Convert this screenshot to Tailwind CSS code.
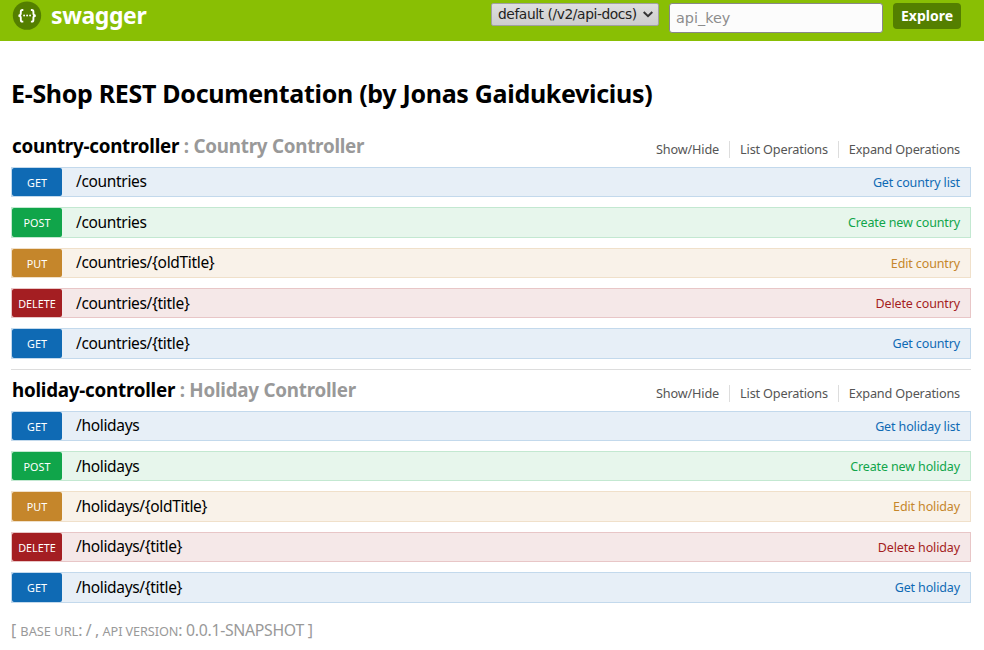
<!DOCTYPE html>
<html lang="en">
<head>
<meta charset="utf-8">
<title>Swagger UI</title>
<script src="https://cdn.jsdelivr.net/npm/@tailwindcss/browser@4"></script>
</head>
<body class="bg-white font-['Noto_Sans','Open_Sans',sans-serif] text-black h-[650px] overflow-hidden">
<header class="h-[41px] bg-[#89bf04] pl-[12px] pr-[23px] flex items-start">
  <svg class="mt-[1px] w-[30px] h-[30px] shrink-0" viewBox="0 0 30 30" fill="none">
    <circle cx="15" cy="14.6" r="14.2" fill="#547f00"/>
    <g stroke="#fff" stroke-width="1.9">
      <path d="M11.3 9H10.4C9.2 9 8.8 9.6 8.8 10.7V12.6C8.8 13.8 8.2 14.7 6.4 14.7C8.2 14.7 8.8 15.6 8.8 16.8V18.7C8.8 19.8 9.2 20.6 10.4 20.6H11.3"/>
      <path d="M18.9 9H19.8C21 9 21.4 9.6 21.4 10.7V12.6C21.4 13.8 22 14.7 23.8 14.7C22 14.7 21.4 15.6 21.4 16.8V18.7C21.4 19.8 21 20.6 19.8 20.6H18.9"/>
    </g>
    <g fill="#fff"><circle cx="12.1" cy="14.5" r="0.95"/><circle cx="15.1" cy="14.5" r="0.95"/><circle cx="18.1" cy="14.5" r="0.95"/></g>
  </svg>
  <span class="ml-[9px] text-[23px] font-bold leading-[30px] tracking-[-0.4px] text-white">swagger</span>
  <div class="ml-auto flex items-start">
    <div class="mt-[3px] w-[168px] h-[23px] rounded-[2px] border border-[#a0a0a0] bg-linear-to-b from-[#dedede] to-[#cdcdcd] pl-[6px] pr-[5px] flex items-center justify-between font-['DejaVu_Sans',sans-serif] text-[13.8px] leading-[21px] text-[#222]">
      <span class="whitespace-nowrap tracking-[-0.42px]">default (/v2/api-docs)</span>
      <svg class="w-[10px] h-[7px]" viewBox="0 0 10 7" fill="none" stroke="#333" stroke-width="2"><path d="M0.7 1L5 5.2L9.3 1"/></svg>
    </div>
    <div class="ml-[10px] mt-[3px] w-[214px] h-[30px] rounded-[3px] border border-[#888] bg-[#fcfcfc] pl-[6px] font-['DejaVu_Sans',sans-serif] text-[14.4px] leading-[29px] text-[#8c8c8c]">api_key</div>
    <div class="ml-[10px] mt-[3px] w-[68px] h-[26px] rounded-[4px] bg-[#547f00] text-center text-[14px] font-bold leading-[26px] text-white">Explore</div>
  </div>
</header>
<main class="pl-[11px] pr-[13px]">
  <h1 class="mt-[35px] h-[35px] text-[25px] leading-[34px] font-bold tracking-[-0.31px] whitespace-nowrap">E-Shop REST Documentation (by Jonas Gaidukevicius)</h1>
  <div id="resources" class="pt-[15.8px]"></div>
  <footer class="mt-[15.4px] text-[15.8px] leading-[24px] text-[#999] whitespace-nowrap flex items-baseline">
    <span class="whitespace-pre">[ </span><span class="text-[12.8px]">BASE URL</span><span class="tracking-[-0.4px] whitespace-pre">: / , </span><span class="text-[12.7px] tracking-[-0.09px]">API VERSION</span><span class="tracking-[-0.3px] whitespace-pre">: 0.0.1-SNAPSHOT ]</span>
  </footer>
</main>
<script>
const theme = {
  GET:    { row: 'bg-[#e7eff7] border-[#c3d9ec]', badge: 'bg-[#0f6ab4]', text: 'text-[#0f6ab4]' },
  POST:   { row: 'bg-[#e7f6ec] border-[#c3e8d1]', badge: 'bg-[#10a54a]', text: 'text-[#10a54a]' },
  PUT:    { row: 'bg-[#f9f2e9] border-[#f0e0ca]', badge: 'bg-[#c5862b]', text: 'text-[#c5862b]' },
  DELETE: { row: 'bg-[#f5e8e8] border-[#e8c6c7]', badge: 'bg-[#a41e22]', text: 'text-[#a41e22]' },
};
const resources = [
  { name: 'country-controller', title: 'Country Controller', ops: [
    ['GET', '/countries', 'Get country list'],
    ['POST', '/countries', 'Create new country'],
    ['PUT', '/countries/{oldTitle}', 'Edit country'],
    ['DELETE', '/countries/{title}', 'Delete country'],
    ['GET', '/countries/{title}', 'Get country'],
  ]},
  { name: 'holiday-controller', title: 'Holiday Controller', ops: [
    ['GET', '/holidays', 'Get holiday list'],
    ['POST', '/holidays', 'Create new holiday'],
    ['PUT', '/holidays/{oldTitle}', 'Edit holiday'],
    ['DELETE', '/holidays/{title}', 'Delete holiday'],
    ['GET', '/holidays/{title}', 'Get holiday'],
  ]},
];
const row = ([m, path, text]) => `
  <li class="h-[30.4px] mb-[10px] border ${theme[m].row} flex items-start">
    <span class="w-[50px] h-full rounded-[2px] ${theme[m].badge} text-center text-[10.8px] leading-[30.4px] text-white">${m}</span>
    <span class="mt-[0.6px] ml-[14px] text-[15.5px] leading-[26px] tracking-[-0.33px]">${path}</span>
    <span class="ml-auto mr-[10px] text-[12.5px] leading-[29px] tracking-[-0.13px] ${theme[m].text}">${text}</span>
  </li>`;
document.getElementById('resources').innerHTML = resources.map((r, i) => `
  <section class="${i ? 'pt-[0.8px]' : 'h-[243px] border-b border-[#ddd]'}">
    <div class="h-[40px] flex items-start">
      <h2 class="pl-[1px] text-[18.8px] leading-[38px] font-bold tracking-[-0.24px] whitespace-nowrap">${r.name} <span class="text-[#999]">: ${r.title}</span></h2>
      <ul class="ml-auto mt-[14px] mr-[1px] flex text-[12.7px] leading-[17px] tracking-[-0.17px] text-[#555]">
        <li class="pr-[10px] border-r border-[#ddd]">Show/Hide</li>
        <li class="px-[10px] border-r border-[#ddd]">List Operations</li>
        <li class="px-[10px]">Expand Operations</li>
      </ul>
    </div>
    <ul>${r.ops.map(row).join('')}</ul>
  </section>`).join('');
</script>
</body>
</html>
